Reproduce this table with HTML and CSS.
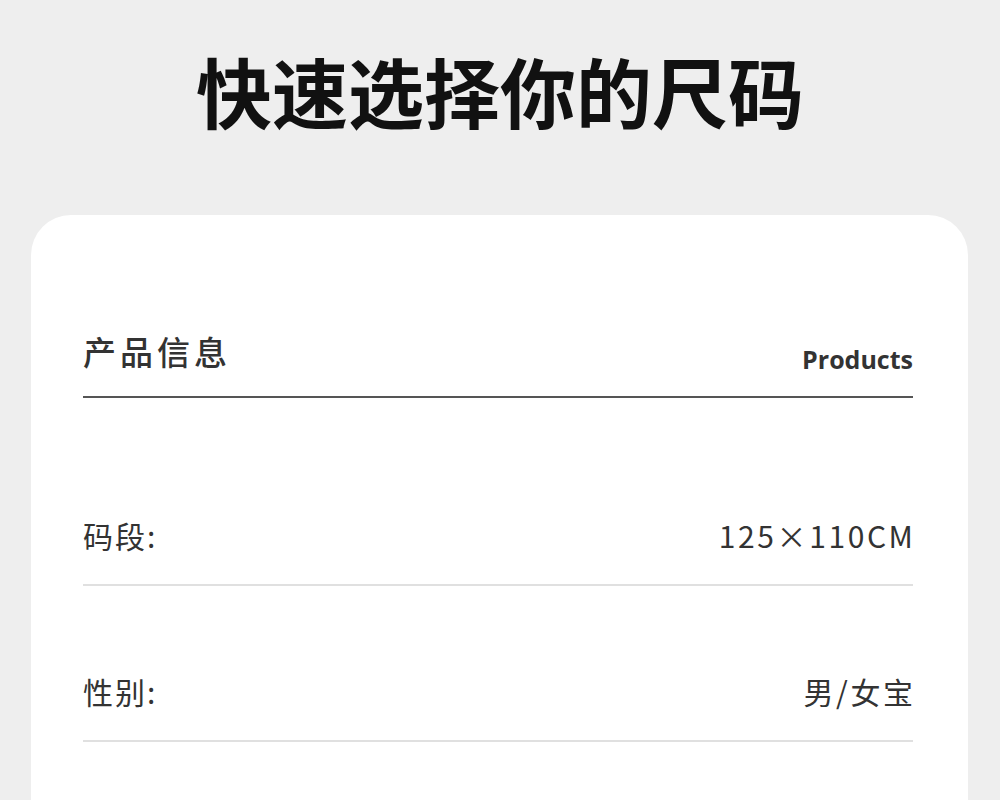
FILE: index.html
```html
<!DOCTYPE html>
<html lang="zh-CN">
<head>
<meta charset="utf-8">
<title>快速选择你的尺码</title>
<link rel="stylesheet" href="styles.css">
</head>
<body>
<h1 class="title">快速选择你的尺码</h1>
<section class="card">
  <div class="card-head">
    <span class="head-cn">产品信息</span>
    <span class="head-en">Products</span>
  </div>
  <div class="row row-first">
    <span class="label">码段:</span>
    <span class="value">125×110CM</span>
  </div>
  <div class="row">
    <span class="label">性别:</span>
    <span class="value">男/女宝</span>
  </div>
</section>
</body>
</html>
```
FILE: styles.css
```css
html, body {
  margin: 0;
  padding: 0;
}
body {
  background: #eeeeee;
  font-family: "Noto Sans CJK SC", "Noto Sans", sans-serif;
  color: #333;
  width: 1000px;
  height: 800px;
  overflow: hidden;
}
.title {
  margin: 0;
  padding-top: 41px;
  height: 215px;
  box-sizing: border-box;
  text-align: center;
  font-size: 76px;
  line-height: 98px;
  font-weight: 700;
  color: #111;
}
.card {
  background: #fff;
  margin: 0 32px 0 31px;
  border-radius: 40px 40px 0 0;
  padding: 116px 55px 0 52px;
  height: 700px;
}
.card-head {
  display: flex;
  justify-content: space-between;
  align-items: flex-end;
  border-bottom: 2px solid #555;
  padding-bottom: 25px;
}
.head-cn {
  font-size: 33px;
  font-weight: 500;
  letter-spacing: 4px;
  line-height: 40px;
  color: #333;
}
.head-en {
  font-family: "Open Sans", sans-serif;
  font-size: 25px;
  font-weight: 700;
  line-height: 30px;
  color: #333;
  margin-bottom: -3px;
}
.row {
  display: flex;
  justify-content: space-between;
  align-items: center;
  padding: 85px 0 29px;
  border-bottom: 2px solid #e0e0e0;
}
.row-first {
  margin-top: 32px;
}
.label, .value {
  font-size: 30px;
  font-weight: 400;
  line-height: 40px;
  color: #333;
}
.label {
  letter-spacing: 2px;
}
.value {
  letter-spacing: 2.6px;
  margin-right: -2.6px;
}
```
